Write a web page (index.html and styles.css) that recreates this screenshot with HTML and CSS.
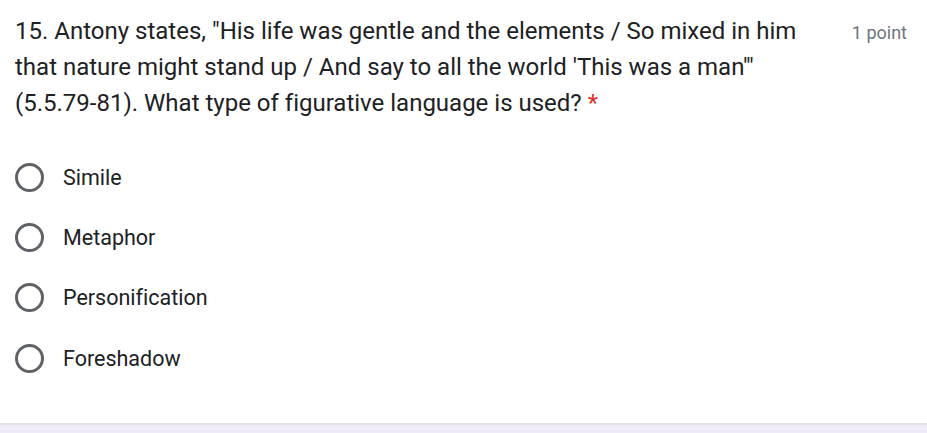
FILE: index.html
```html
<!DOCTYPE html>
<html>
<head>
<meta charset="utf-8">
<link rel="stylesheet" href="styles.css">
</head>
<body>
<div class="card">
  <div class="header">
    <div class="title">15. Antony states, "His life was gentle and the elements / So mixed in him that nature might stand up / And say to all the world 'This was a man'" (5.5.79-81). What type of figurative language is used? <span class="req">*</span></div>
    <div class="points">1 point</div>
  </div>
  <div class="options">
    <div class="option"><span class="radio"></span><span class="label">Simile</span></div>
    <div class="option"><span class="radio"></span><span class="label">Metaphor</span></div>
    <div class="option"><span class="radio"></span><span class="label">Personification</span></div>
    <div class="option"><span class="radio"></span><span class="label">Foreshadow</span></div>
  </div>
</div>
<div class="footer"></div>
</body>
</html>
```
FILE: styles.css
```css
html, body {
  margin: 0;
  padding: 0;
  background: #ffffff;
}
body {
  width: 927px;
  height: 433px;
  overflow: hidden;
  display: flex;
  flex-direction: column;
  font-family: Roboto, "Noto Sans", sans-serif;
  font-variant-ligatures: none;
}
.card {
  height: 425px;
  box-sizing: border-box;
  padding: 13px 20px 0 15px;
  border-bottom: 2px solid #e3e2e7;
}
.footer {
  flex: 1;
  background: #f0ebf8;
}
.header {
  display: flex;
  align-items: flex-start;
  justify-content: space-between;
}
.title {
  width: 815px;
  font-size: 24px;
  line-height: 36px;
  color: #202124;
}
.req {
  color: #d93025;
}
.points {
  font-size: 18px;
  line-height: 40px;
  color: #70757a;
  white-space: nowrap;
}
.options {
  margin-top: 26px;
  display: flex;
  flex-direction: column;
}
.option {
  height: 60.3px;
  display: flex;
  align-items: center;
}
.radio {
  width: 23px;
  height: 23px;
  border: 3px solid #5f6368;
  border-radius: 50%;
  flex: none;
}
.label {
  margin-left: 19px;
  font-size: 21.5px;
  color: #202124;
}
```
